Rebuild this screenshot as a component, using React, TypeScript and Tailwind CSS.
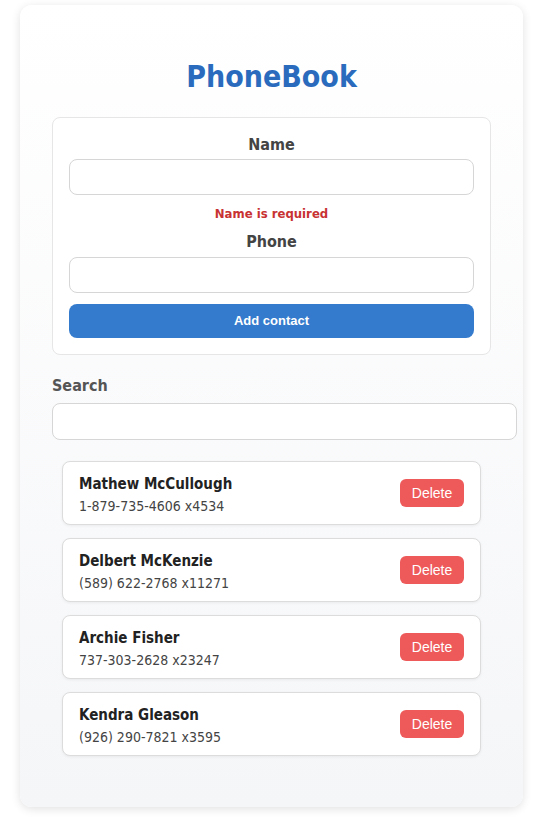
const contacts = [
  { id: 1, name: 'Mathew McCullough', phone: '1-879-735-4606 x4534' },
  { id: 2, name: 'Delbert McKenzie', phone: '(589) 622-2768 x11271' },
  { id: 3, name: 'Archie Fisher', phone: '737-303-2628 x23247' },
  { id: 4, name: 'Kendra Gleason', phone: '(926) 290-7821 x3595' },
]

const font = "font-['DejaVu_Sans_Condensed','DejaVu_Sans',sans-serif]"

function App() {
  return (
    <div className="min-h-[824px] bg-white pt-[5px]">
      <div
        className={`ml-[20px] h-[802px] w-[503px] rounded-[12px] bg-gradient-to-b from-white to-[#f5f6f8] px-[32px] pt-[54px] shadow-[0_2px_10px_rgba(0,0,0,0.12)] ${font}`}
      >
        <h1 className="text-center text-[30px] leading-[36px] font-bold text-[#2b6bbd]">
          PhoneBook
        </h1>

        <form className="mt-[22px] flex flex-col rounded-[8px] border border-[#e6e6e6] bg-white p-[16px]">
          <label className="text-center text-[16px] leading-[21px] font-bold text-[#444]">
            Name
          </label>
          <input className="mt-[4px] h-[36px] rounded-[8px] border border-[#d6d6d6] bg-white px-3 outline-none" />
          <p className="mt-[10px] text-center text-[13px] leading-[18px] font-bold text-[#c83232]">
            Name is required
          </p>
          <label className="mt-[8px] text-center text-[16px] leading-[22px] font-bold text-[#444]">
            Phone
          </label>
          <input className="mt-[4px] h-[36px] rounded-[8px] border border-[#d6d6d6] bg-white px-3 outline-none" />
          <button
            type="button"
            className="mt-[11px] h-[34px] rounded-[8px] bg-[#347bcd] font-['Liberation_Sans',Arial,sans-serif] text-[13px] font-bold text-white"
          >
            Add contact
          </button>
        </form>

        <label className="mt-[21px] block text-[16px] leading-[20px] font-bold text-[#555]">
          Search
        </label>
        <input className="mt-[7px] h-[37px] w-[465px] rounded-[8px] border border-[#d6d6d6] bg-white px-3 outline-none" />

        <ul className="mt-[21px] flex flex-col gap-[13px] px-[10px]">
          {contacts.map((c) => (
            <li
              key={c.id}
              className="flex h-[64px] items-center justify-between rounded-[8px] border border-[#dcdcdc] bg-white px-[16px] shadow-[0_1px_3px_rgba(0,0,0,0.06)]"
            >
              <div className="flex flex-col gap-[2px] pt-[3px]">
                <span className="text-[15px] leading-[20px] font-bold text-[#222]">
                  {c.name}
                </span>
                <span className="text-[14px] leading-[20px] text-[#444]">
                  {c.phone}
                </span>
              </div>
              <button
                type="button"
                className="h-[28px] w-[64px] rounded-[6px] bg-[#ee5a5a] font-['Liberation_Sans',Arial,sans-serif] text-[14px] text-white"
              >
                Delete
              </button>
            </li>
          ))}
        </ul>
      </div>
    </div>
  )
}

export default App
